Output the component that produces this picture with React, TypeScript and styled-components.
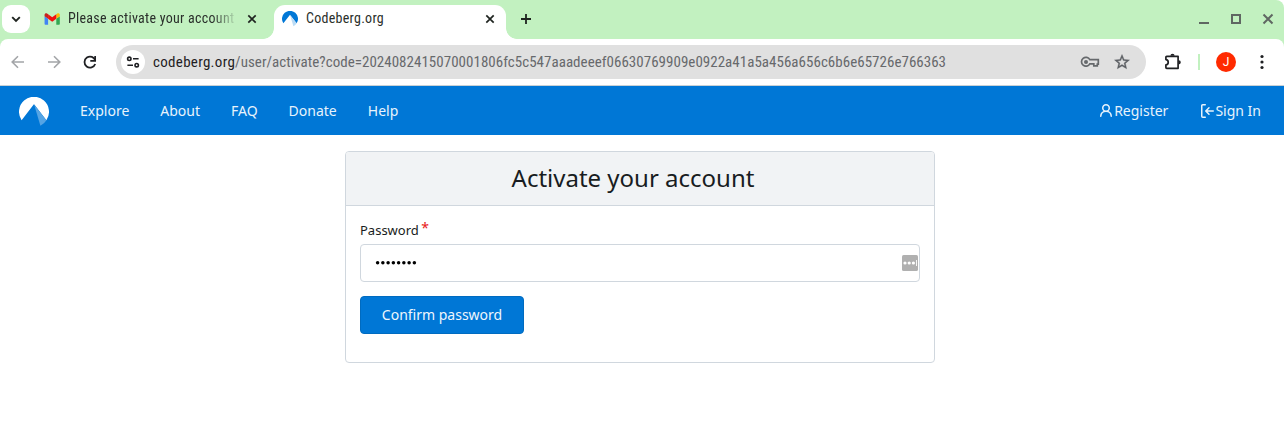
import React from "react";
import styled, { createGlobalStyle } from "styled-components";

const GlobalStyle = createGlobalStyle`
  * { box-sizing: border-box; }
  html, body { margin: 0; background: #fff; }
  body { font-family: "Noto Sans", sans-serif; overflow: hidden; }
`;

const Window = styled.div`
  width: 1284px;
  height: 427px;
  background: #fff;
`;

const TabStrip = styled.div`
  display: flex;
  height: 39px;
  padding-top: 5px;
  background: #c2f1c0;
  border-top-right-radius: 8px;
`;

const TabSearch = styled.button`
  width: 28px;
  height: 28px;
  margin: 0 0 0 2px;
  padding: 0;
  border: 0;
  border-radius: 9px;
  background: #fff;
  display: grid;
  place-items: center;
`;

const chromeFont = `Roboto, "Noto Sans", sans-serif`;

const Tab = styled.div<{ $active?: boolean }>`
  position: relative;
  display: flex;
  align-items: center;
  width: ${(p) => (p.$active ? 232 : 244)}px;
  height: 34px;
  padding: 0 ${(p) => (p.$active ? 11 : 17)}px 6px ${(p) => (p.$active ? 8 : 14)}px;
  border-radius: 11px 11px 0 0;
  background: ${(p) => (p.$active ? "#fff" : "transparent")};
  color: #2a2f2b;
  font: 14px/28px ${chromeFont};
  font-stretch: 87%;

  &::before,
  &::after {
    content: "";
    display: ${(p) => (p.$active ? "block" : "none")};
    position: absolute;
    bottom: 0;
    width: 11px;
    height: 11px;
  }
  &::before {
    left: -11px;
    background: radial-gradient(circle at 0 0, #c2f1c0 10.5px, #fff 11.2px);
  }
  &::after {
    right: -11px;
    background: radial-gradient(circle at 100% 0, #c2f1c0 10.5px, #fff 11.2px);
  }
`;

const TabTitle = styled.span<{ $fade?: boolean }>`
  flex: 1;
  margin-left: 8px;
  margin-right: ${(p) => (p.$fade ? 11 : 8)}px;
  padding-bottom: 2px;
  line-height: 25px;
  overflow: hidden;
  white-space: nowrap;
  letter-spacing: 0.27px;
  ${(p) => p.$fade && "mask-image: linear-gradient(90deg, #000 86%, transparent 101%);"}
`;

const NewTab = styled.div`
  margin-left: 13px;
  padding-top: 7px;
  line-height: 0;
`;

const WindowControls = styled.div`
  display: flex;
  gap: 16px;
  margin-left: auto;
  padding: 6px 8px 0 0;
`;

const Toolbar = styled.div`
  background: #c2f1c0;
`;

const ToolbarRow = styled.div`
  display: flex;
  align-items: center;
  height: 47px;
  border-bottom: 1px solid #c9d1d6;
  border-radius: 8px 8px 0 0;
  background: #fff;
`;

const NavButtons = styled.div`
  display: flex;
  gap: 16px;
  padding-left: 8px;
`;

const AddressBar = styled.div`
  display: flex;
  align-items: center;
  width: 1030px;
  height: 34px;
  margin-left: 16px;
  padding: 0 15px 0 5px;
  border-radius: 17px;
  background: #e0e0e0;
`;

const SiteInfo = styled.div`
  display: grid;
  place-items: center;
  width: 24px;
  height: 24px;
  border-radius: 50%;
  background: #fff;
`;

const Url = styled.div`
  flex: 1;
  margin-left: 8px;
  white-space: nowrap;
  font: 15px/24px ${chromeFont};
  font-stretch: 87%;
  letter-spacing: 0.03px;
  color: #67696c;
`;

const Domain = styled.span`
  color: #1f2023;
  letter-spacing: 0.3px;
`;

const BarIcons = styled.div`
  display: flex;
  align-items: center;
  gap: 13px;
`;

const ToolbarEnd = styled.div`
  display: flex;
  align-items: center;
  margin-left: 17px;
`;

const Separator = styled.div`
  width: 2px;
  height: 16px;
  margin: 0 16px 0 15px;
  background: #c2f1c0;
`;

const Avatar = styled.div`
  width: 20px;
  height: 20px;
  margin-right: 16px;
  border-radius: 50%;
  background: #ff2a00;
  color: #fff;
  font: 12px/20px Roboto, sans-serif;
  text-align: center;
`;

const SiteNav = styled.nav`
  display: flex;
  align-items: center;
  height: 49px;
  padding: 0 23px 0 19px;
  background: #0077d6;
  color: #e8f3fc;
  font-size: 14px;
  line-height: 20px;
`;

const HomeLink = styled.a`
  display: flex;
  padding-top: 2px;
`;

const NavLinks = styled.div`
  display: flex;
  gap: 31px;
  margin-left: 31px;
`;

const UserLinks = styled.div`
  display: flex;
  gap: 31px;
  margin-left: auto;
`;

const NavLink = styled.a`
  display: flex;
  align-items: center;
  white-space: nowrap;
`;

const Card = styled.main`
  width: 590px;
  height: 212px;
  margin: 16px 0 0 345px;
  border: 1px solid #d0d7de;
  border-radius: 4px;
  color: #181c21;
`;

const CardTitle = styled.h1`
  height: 54px;
  margin: 0;
  padding-right: 14px;
  border-bottom: 1px solid #d0d7de;
  border-radius: 3px 3px 0 0;
  background: #f1f3f5;
  font-size: 24px;
  font-weight: 400;
  line-height: 51px;
  text-align: center;
`;

const Form = styled.form`
  padding: 14px;
`;

const Label = styled.label`
  display: block;
  height: 20px;
  margin-bottom: 4px;
  font-size: 13px;
  line-height: 20px;
`;

const Required = styled.span`
  display: inline-block;
  margin-left: 2.5px;
  color: #e81818;
  font-size: 14px;
  line-height: 14px;
  transform: translateY(-2.5px);
`;

const PasswordField = styled.div`
  display: flex;
  align-items: center;
  justify-content: space-between;
  height: 38px;
  padding: 0 1px 0 14px;
  border: 1px solid #d0d7de;
  border-radius: 4px;
  background: #fff;
`;

const Submit = styled.button`
  display: block;
  width: 164px;
  height: 38px;
  margin-top: 14px;
  padding: 0;
  border: 1px solid #006bc0;
  border-radius: 4px;
  background: #0077d6;
  color: #eef6fd;
  font: 14px/20px "Noto Sans", sans-serif;
`;

const CloseIcon = () => (
  <svg width="10" height="10" viewBox="0 0 10 10" stroke="#1f2420" strokeWidth="1.7">
    <path d="M1.3 1.3 8.7 8.7M8.7 1.3 1.3 8.7" />
  </svg>
);

const MountainLogo = ({ size, disc, slope }: { size: number; disc: string; slope: string }) => (
  <svg width={size} height={size} viewBox="0 0 30 30">
    <path d="M2.6 23.2A15 15 0 1 1 27.4 23.2L15.3 7.4a.4.4 0 0 0-.6 0Z" fill={disc} />
    <path d="M15.2 7.8 27.4 23.2A15 15 0 0 1 21.4 28.8Z" fill={slope} />
  </svg>
);

const ArrowIcon = ({ flip }: { flip?: boolean }) => (
  <svg width="20" height="20" viewBox="0 0 20 20" fill="none" stroke="#a3a5a8" strokeWidth="1.6">
    <path d={flip ? "M4 10h11.5M10 4.2l5.8 5.8-5.8 5.8" : "M16 10H4.5M10 4.2 4.2 10l5.8 5.8"} />
  </svg>
);

export default function App() {
  return (
    <Window>
      <GlobalStyle />
      <TabStrip>
        <TabSearch aria-label="Search tabs">
          <svg width="10" height="7" viewBox="0 0 10 7" fill="none" stroke="#1f2420" strokeWidth="1.9">
            <path d="m1.2 1.2 3.8 3.8 3.8-3.8" />
          </svg>
        </TabSearch>
        <Tab>
          <svg width="16" height="12" viewBox="-.6 0 16.8 12">
            <path d="M1.1 12h2.6V5.8L0 3v7.9C0 11.5.5 12 1.1 12Z" fill="#4285f4" />
            <path d="M12.3 12h2.6c.6 0 1.1-.5 1.1-1.1V3l-3.7 2.8Z" fill="#34a853" />
            <path d="M12.3 1v4.8L16 3V1.6c0-1.4-1.6-2.1-2.6-1.4Z" fill="#fbbc04" />
            <path d="M3.7 5.8V1L8 4.2 12.3 1v4.8L8 9Z" fill="#f00f0f" />
            <path d="M0 1.6V3l3.7 2.8V1L2.6.2C1.5-.6 0 .2 0 1.6Z" fill="#c5221f" />
          </svg>
          <TabTitle $fade>Please activate your account</TabTitle>
          <CloseIcon />
        </Tab>
        <Tab $active>
          <MountainLogo size={16} disc="#0077d6" slope="#bcdcf5" />
          <TabTitle>Codeberg.org</TabTitle>
          <CloseIcon />
        </Tab>
        <NewTab>
          <svg width="14" height="14" viewBox="0 0 14 14" stroke="#1f2420" strokeWidth="1.8">
            <path d="M7 2v10M2 7h10" />
          </svg>
        </NewTab>
        <WindowControls>
          <svg width="16" height="16" viewBox="0 0 16 16" fill="#5f6762"><path d="M3 11h10v2H3z" /></svg>
          <svg width="16" height="16" viewBox="0 0 16 16" fill="none" stroke="#5f6762" strokeWidth="2"><path d="M4 4h8v8H4z" /></svg>
          <svg width="16" height="16" viewBox="0 0 16 16" stroke="#5f6762" strokeWidth="2"><path d="m3.5 3.5 9 9M12.5 3.5l-9 9" /></svg>
        </WindowControls>
      </TabStrip>
      <Toolbar>
        <ToolbarRow>
          <NavButtons>
            <ArrowIcon />
            <ArrowIcon flip />
            <svg width="20" height="20" viewBox="0 0 20 20">
              <path d="M15.3 8.6A5.5 5.5 0 1 0 15.2 12" fill="none" stroke="#1f2023" strokeWidth="1.8" />
              <path d="M16 4v5.7h-5.7V8h4V4Z" fill="#1f2023" />
            </svg>
          </NavButtons>
          <AddressBar>
            <SiteInfo>
              <svg width="14" height="12" viewBox="0 0 14 12" fill="none" stroke="#1f2023" strokeWidth="1.6">
                <circle cx="3.3" cy="2.8" r="1.7" />
                <path d="M7 2.8h5.6M1.4 9.2H7" />
                <circle cx="10.7" cy="9.2" r="1.7" />
              </svg>
            </SiteInfo>
            <Url>
              <Domain>codeberg.org</Domain>
              /user/activate?code=2024082415070001806fc5c547aaadeeef06630769909e0922a41a5a456a656c6b6e65726e766363
            </Url>
            <BarIcons>
              <svg width="20" height="20" viewBox="0 0 20 20" fill="none" stroke="#66696c" strokeWidth="1.7">
                <path d="M9.8 7.7h8.5v4.4h-1v1.8h-3.5v-2.1h-4A4.4 4.4 0 1 1 9.8 7.7Z" />
                <circle cx="6" cy="10" r="2" fill="#66696c" stroke="none" />
              </svg>
              <svg width="18" height="18" viewBox="0 0 24 24" fill="#5c5f63" stroke="#5c5f63" strokeWidth=".5">
                <path d="m22 9.24-7.19-.62L12 2 9.19 8.63 2 9.24l5.46 4.73L5.82 21 12 17.27 18.18 21l-1.63-7.03L22 9.24zM12 15.4l-3.76 2.27 1-4.28-3.32-2.88 4.38-.38L12 6.1l1.71 4.04 4.38.38-3.32 2.88 1 4.28L12 15.4z" />
              </svg>
            </BarIcons>
          </AddressBar>
          <ToolbarEnd>
            <svg width="20" height="20" viewBox="0 0 20 20">
              <path d="M3.7 4.3h11.4v12H3.7c-.5 0-.8-.3-.8-.8v-2.6c3.1-.2 3.1-5.1 0-5.3V5.1c0-.5.3-.8.8-.8Z" fill="none" stroke="#1f2023" strokeWidth="1.7" strokeLinejoin="round" />
              <path d="M7.4 3.8a2.1 2.1 0 0 1 4.2 0ZM15.7 8.2a2.1 2.1 0 0 1 0 4.2Z" fill="#1f2023" />
            </svg>
            <Separator />
            <Avatar>J</Avatar>
            <svg width="20" height="20" viewBox="0 0 20 20" fill="#1f2023">
              <circle cx="10" cy="4.5" r="1.6" /><circle cx="10" cy="10" r="1.6" /><circle cx="10" cy="15.5" r="1.6" />
            </svg>
          </ToolbarEnd>
        </ToolbarRow>
      </Toolbar>
      <SiteNav>
        <HomeLink>
          <MountainLogo size={30} disc="#fff" slope="#55a4e4" />
        </HomeLink>
        <NavLinks>
          <NavLink>Explore</NavLink>
          <NavLink>About</NavLink>
          <NavLink>FAQ</NavLink>
          <NavLink>Donate</NavLink>
          <NavLink>Help</NavLink>
        </NavLinks>
        <UserLinks>
          <NavLink>
            <svg width="16" height="16" viewBox="0 0 16 16" fill="currentColor">
              <path d="M10.561 8.073a6.005 6.005 0 0 1 3.432 5.142.75.75 0 1 1-1.498.07 4.5 4.5 0 0 0-8.99 0 .75.75 0 0 1-1.498-.07 6.004 6.004 0 0 1 3.431-5.142 3.999 3.999 0 1 1 5.123 0ZM10.5 5a2.5 2.5 0 1 0-5 0 2.5 2.5 0 0 0 5 0Z" />
            </svg>
            Register
          </NavLink>
          <NavLink>
            <svg width="16" height="16" viewBox="0 0 16 16" fill="currentColor">
              <path d="M2 2.75C2 1.784 2.784 1 3.75 1h2.5a.75.75 0 0 1 0 1.5h-2.5a.25.25 0 0 0-.25.25v10.5c0 .138.112.25.25.25h2.5a.75.75 0 0 1 0 1.5h-2.5A1.75 1.75 0 0 1 2 13.25Zm6.56 4.5h5.69a.75.75 0 0 1 0 1.5H8.56l1.97 1.97a.75.75 0 0 1-1.06 1.06L6.22 8.53a.75.75 0 0 1 0-1.06l3.25-3.25a.75.75 0 0 1 1.06 1.06L8.56 7.25Z" />
            </svg>
            Sign In
          </NavLink>
        </UserLinks>
      </SiteNav>
      <Card>
        <CardTitle>Activate your account</CardTitle>
        <Form>
          <Label>Password<Required>*</Required></Label>
          <PasswordField>
            <svg width="44" height="8" viewBox="0 0 44 8" fill="#000">
              {Array.from({ length: 8 }, (_, i) => (
                <circle key={i} cx={2.6 + i * 5.25} cy="3.7" r="1.75" />
              ))}
            </svg>
            <svg width="16" height="16" viewBox="0 0 16 16">
              <rect width="16" height="16" rx="1.6" fill="#b0b0b0" />
              <g fill="#fff">
                <circle cx="3" cy="8" r="1.6" /><circle cx="7.2" cy="8" r="1.6" /><circle cx="11.4" cy="8" r="1.6" />
                <path d="M14 5h.9v6H14z" />
              </g>
            </svg>
          </PasswordField>
          <Submit type="button">Confirm password</Submit>
        </Form>
      </Card>
    </Window>
  );
}
